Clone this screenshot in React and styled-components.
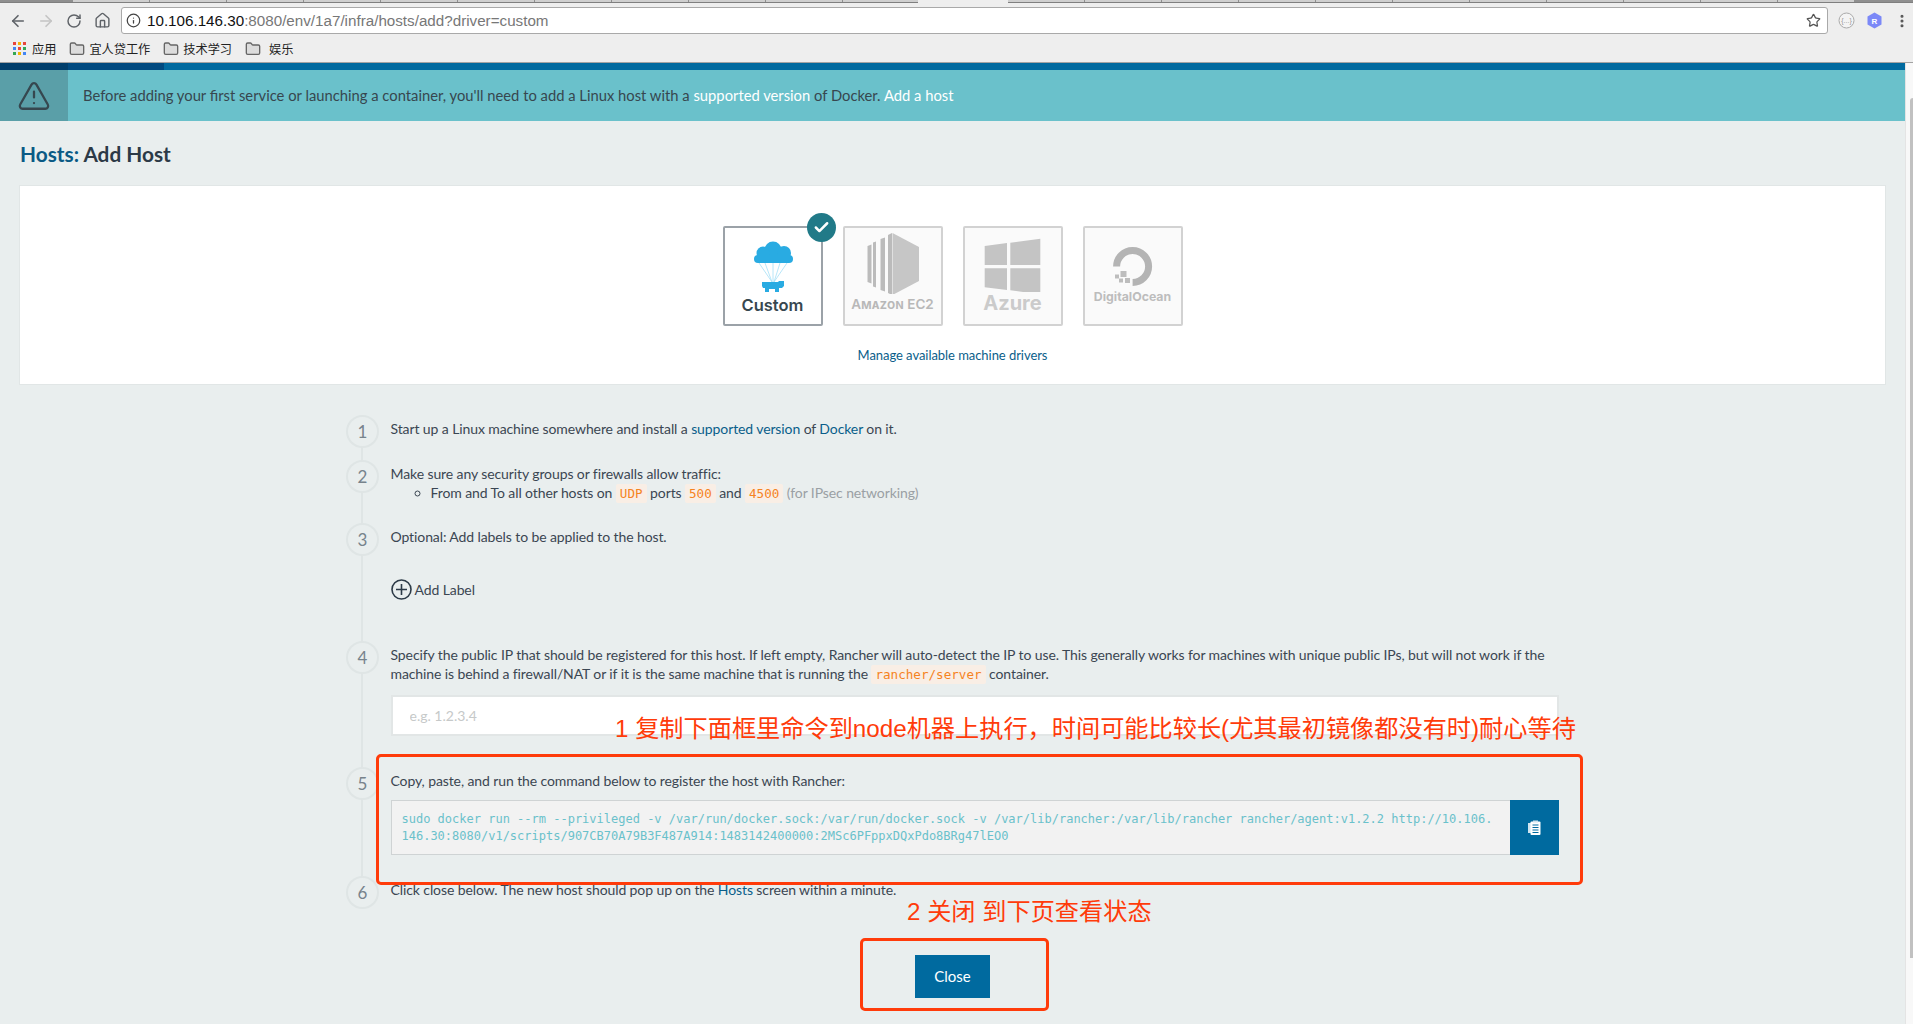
import React from 'react';
import styled, { createGlobalStyle } from 'styled-components';
import { ArrowLeft, ArrowRight, RotateCw, Home, Info, Star, EllipsisVertical, Folder, TriangleAlert, Check } from 'lucide-react';

const GlobalStyle = createGlobalStyle`
  html, body {
    height: 100%;
    margin: 0;
    overflow: hidden;
  }
  *, *::before, *::after {
    box-sizing: border-box;
  }
  body {
    font-family: Lato, "Noto Sans CJK SC", sans-serif;
    font-size: 14px;
    color: #3b4652;
    background: #e9eeee;
  }
`;

const Screen = styled.div`
  position: relative;
  width: 1913px;
  height: 1024px;
  overflow: hidden;
  display: flex;
  flex-direction: column;
`;

/* browser chrome */
const TabStrip = styled.div`
  height: 3px;
  display: flex;
  background: #eeeeee;
`;

const TabRun = styled.div`
  width: ${p => p.$width}px;
  flex: ${p => (p.$width ? 'none' : 1)};
  border-bottom: 1px solid #7f7f7f;
  background: ${p => p.$color || 'repeating-linear-gradient(90deg, #cfcfcf 0 76px, #8f8f8f 76px 77px)'};
`;

const ActiveTab = styled.div`
  width: 90px;
  flex: none;
`;

const Toolbar = styled.div`
  height: 34px;
  padding: 4px 0 3px 4px;
  display: flex;
  align-items: stretch;
  background: #eeeeee;
`;

const NavButton = styled.div`
  width: 28px;
  flex: none;
  display: flex;
  align-items: center;
  justify-content: center;
  color: ${p => p.$color || '#5f6368'};
`;

const AddressBar = styled.div`
  flex: 1;
  margin-left: 5px;
  padding-left: 4px;
  display: flex;
  align-items: center;
  background: #fff;
  border: 1px solid #a9a9a9;
  border-radius: 3px;
  font-family: "Liberation Sans", Arial, sans-serif;
  font-size: 15.2px;
  color: #777;
`;

const Host = styled.span`
  color: #111;
`;

const Url = styled.span`
  flex: 1;
  margin-left: 6px;
`;

const ToolActions = styled.div`
  width: 85px;
  flex: none;
  padding-left: 4px;
  display: flex;
`;

const BookmarksBar = styled.div`
  height: 26px;
  padding: 0 0 2px 13px;
  display: flex;
  align-items: center;
  background: #eeeeee;
  border-bottom: 1px solid #a3a3a3;
  font-size: 12.2px;
  color: #222;
  font-family: "Noto Sans CJK SC", sans-serif;
`;

const AppsGrid = styled.div`
  width: 13px;
  display: grid;
  grid-template-columns: repeat(3, 3px);
  gap: 2px;
  margin-right: 6px;
`;

const AppsDot = styled.i`
  display: block;
  height: 3px;
  background: ${p => p.$color};
`;

const Bookmark = styled.div`
  display: flex;
  align-items: center;
  gap: ${p => p.$gap || 4}px;
  margin-right: 13px;
  color: #222;
  svg {
    fill: #dcdcdc;
    color: #666;
  }
`;

/* page */
const Body = styled.div`
  flex: 1;
  display: flex;
  min-height: 0;
`;

const Page = styled.div`
  flex: 1;
  min-width: 0;
`;

const Scrollbar = styled.div`
  width: 8px;
  flex: none;
  padding: 35px 0 0 4px;
  background: #f8f8f8;
  border-left: 1px solid #e4e4e4;
`;

const ScrollThumb = styled.div`
  height: 860px;
  background: #c1c1c1;
  border-radius: 3px 0 0 0;
`;

const ProgressBar = styled.div`
  height: 7px;
  display: flex;
  background: #006a9f;
`;

const ProgressPart = styled.div`
  width: ${p => p.$width}px;
  background: ${p => p.$color};
`;

const Banner = styled.div`
  height: 51px;
  display: flex;
  align-items: center;
  background: #6ac1cb;
  font-size: 14.77px;
  color: #37474f;
`;

const BannerIcon = styled.div`
  width: 68px;
  height: 100%;
  margin-right: 15px;
  display: flex;
  align-items: center;
  justify-content: center;
  background: #5a9fa8;
  color: #36474f;
`;

const BannerText = styled.span`
  margin-bottom: 2px;
`;

const BannerLink = styled.a`
  color: #fff;
`;

const Content = styled.div`
  padding: 20px 20px 0;
`;

const Title = styled.h1`
  margin: 0 0 19px;
  font-size: 20.8px;
  line-height: 26px;
  font-weight: 700;
  color: #2c3a47;
`;

const TitleLink = styled.span`
  color: #0a5a85;
`;

const DriverCard = styled.div`
  height: 198px;
  padding-top: 40px;
  background: #fff;
  box-shadow: 0 0 0 1px #e1e6e6;
`;

const Drivers = styled.div`
  display: flex;
  justify-content: center;
  gap: 20px;
`;

const DriverTile = styled.div`
  position: relative;
  width: 100px;
  height: 100px;
  display: flex;
  flex-direction: column;
  align-items: center;
  background: ${p => (p.$active ? '#fff' : '#fafafa')};
  border: 2px solid ${p => (p.$active ? '#9ba2a8' : '#d2d2d2')};
  border-radius: 2px;
`;

const Logo = styled.svg`
  display: block;
  flex: none;
`;

const DriverLabel = styled.div`
  margin-top: ${p => p.$top}px;
  font-family: ${p => p.$font || 'Inter'}, sans-serif;
  font-size: ${p => p.$size}px;
  line-height: 20px;
  font-weight: ${p => p.$weight || 700};
  font-variant: ${p => p.$variant || 'normal'};
  white-space: nowrap;
  color: ${p => p.$color || '#c4c4c4'};
`;

const CheckBadge = styled.div`
  position: absolute;
  top: -15px;
  right: -15px;
  width: 29px;
  height: 29px;
  display: flex;
  align-items: center;
  justify-content: center;
  border-radius: 50%;
  background: #217a88;
  color: #fff;
`;

const ManageLink = styled.a`
  display: block;
  margin-top: 19px;
  text-align: center;
  font-size: 13px;
  line-height: 20px;
  letter-spacing: -0.05px;
  color: #0a5e8a;
`;

const Steps = styled.div`
  position: relative;
  width: 1213px;
  margin: 31px auto 0;
  &::before {
    content: '';
    position: absolute;
    left: 15px;
    top: 16px;
    bottom: 60px;
    width: 2px;
    background: #dfe5e5;
  }
`;

const Step = styled.div`
  position: relative;
  height: ${p => p.$height}px;
  display: flex;
  align-items: flex-start;
  gap: 11.5px;
`;

const StepNumber = styled.div`
  width: 33px;
  height: 33px;
  flex: none;
  display: flex;
  align-items: center;
  justify-content: center;
  border: 2px solid #dfe5e5;
  border-radius: 50%;
  background: #e9eeee;
  font-size: 17px;
  color: #77838c;
`;

const StepBody = styled.div`
  flex: 1;
  min-width: 0;
  padding-top: 4px;
  line-height: 19px;
  letter-spacing: -0.1px;
`;

const TextLink = styled.a`
  color: #0a5e8a;
`;

const Muted = styled.span`
  color: #9aa0a4;
`;

const Code = styled.code`
  padding: 2px 4px;
  background: #f9eee5;
  border-radius: 2px;
  font-family: "DejaVu Sans Mono", monospace;
  font-size: 12.6px;
  letter-spacing: 0;
  color: #f5831f;
`;

const SubList = styled.ul`
  margin: 0;
  padding-left: 40px;
  list-style: circle;
`;

const AddLabel = styled.div`
  margin-top: 33px;
  display: flex;
  align-items: center;
  gap: 3px;
  color: #3b4652;
  svg {
    color: #2c3a47;
  }
`;

const IpInput = styled.input`
  display: block;
  width: 100%;
  height: 41px;
  margin-top: 11px;
  padding: 0 17px;
  background: #fff;
  border: 2px solid #e2e6e6;
  font-family: Lato, sans-serif;
  font-size: 14px;
  &::placeholder {
    color: #c6c9c9;
  }
`;

const CommandRow = styled.div`
  height: 55px;
  margin-top: 10px;
  display: flex;
`;

const Command = styled.div`
  flex: 1;
  padding: 10px 10px;
  background: #f2f2f2;
  border: 1px solid #cfd3d4;
  border-right: 0;
  font-family: "DejaVu Sans Mono", monospace;
  font-size: 12px;
  line-height: 17px;
  letter-spacing: 0;
  white-space: nowrap;
  color: #6ac1cb;
`;

const CopyButton = styled.div`
  width: 49px;
  flex: none;
  display: flex;
  align-items: center;
  justify-content: center;
  background: #006a9f;
`;

const Footer = styled.div`
  display: flex;
  justify-content: center;
  width: 1865px;
`;

const CloseButton = styled.button`
  width: 75px;
  height: 43px;
  padding: 0 0 2px;
  border: 0;
  background: #006a9f;
  font-family: Lato, sans-serif;
  font-size: 15px;
  color: #fff;
`;

/* red notes drawn on top of the screenshot */
const NoteBox = styled.div`
  position: absolute;
  left: ${p => p.$left}px;
  top: ${p => p.$top}px;
  width: ${p => p.$width}px;
  height: ${p => p.$height}px;
  border: 3px solid #ff3b0a;
  border-radius: 5px;
  pointer-events: none;
`;

const NoteText = styled.div`
  position: absolute;
  left: ${p => p.$left}px;
  top: ${p => p.$top}px;
  font-family: "Liberation Sans", "Noto Sans CJK SC", sans-serif;
  font-size: 24.2px;
  line-height: 30px;
  white-space: nowrap;
  color: #ff3b0a;
`;

const appColors = ['#e8453c', '#f4b400', '#e8453c', '#4285f4', '#e8453c', '#34a853', '#34a853', '#f4b400', '#4285f4'];

function CustomLogo() {
  return (
    <Logo width="96" height="65" viewBox="2 2 96 65">
      <g stroke="#a6dff6" strokeWidth="0.8">
        <path d="M36 37 L49 56M42 37 L49 56M50 37 L50 56M57 37 L51 56M64 37 L51 56" />
      </g>
      <g fill="#29abe2">
        <circle cx="50" cy="24" r="8.500" />
        <circle cx="40" cy="27" r="6.500" />
        <circle cx="61" cy="27" r="7" />
        <rect x="31" y="29" width="39" height="8" rx="4" />
        <path d="M39 56h16l1-1h5v5l-2 2h-3v4h-4v-3h-6v3h-4v-4h-2l-1-2z" />
      </g>
    </Logo>
  );
}

function Ec2Logo() {
  return (
    <Logo width="96" height="66" viewBox="2 2 96 66">
      <g fill="#bbbbbb">
        <path d="M24.500 20l4-1.500v39l-4-1.500zM30 16.500l3-1v46l-3-1zM37.500 13l4.500-1.500v54l-4.500-1.500zM45 9l4-2v62l-4-2z" />
      </g>
      <path d="M49.500 7L76 21v34L49.500 69z" fill="#c6c6c6" />
    </Logo>
  );
}

function AzureLogo() {
  return (
    <Logo width="96" height="64" viewBox="2 2 96 64">
      <path
        fill="#c4c4c4"
        d="M21.700 20L44 17v22H21.700zM47.300 16.700l30-4V39h-30zM21.700 42.300H44V64l-22.300-2.700zM47.300 42.300h30v26l-30-4z"
      />
    </Logo>
  );
}

function OceanLogo() {
  return (
    <Logo width="96" height="58" viewBox="2 2 96 58">
      <path d="M33.600 40.500a16 16 0 1 1 16 16" fill="none" stroke="#b4b4b4" strokeWidth="7" />
      <g fill="#bdbdbd">
        <rect x="37.500" y="45" width="6" height="6" />
        <rect x="32" y="48.500" width="4" height="4" />
        <rect x="36" y="52.500" width="4" height="4" />
        <rect x="42" y="52" width="5" height="5" />
      </g>
    </Logo>
  );
}

function CopyIcon() {
  return (
    <svg width="15" height="16" viewBox="0 0 15 16">
      <path d="M1 3h3v10H1z" fill="#cfe4ef" />
      <rect x="3.500" y="1.500" width="10" height="13.500" rx="1" fill="#fff" />
      <path d="M5.500 5h6M5.500 7.500h6M5.500 10h6M5.500 12.500h6" stroke="#006a9f" strokeWidth="1" />
      <rect x="6" y="0.500" width="5" height="2" fill="#cfe4ef" />
    </svg>
  );
}

export default function App() {
  return (
    <Screen>
      <GlobalStyle />
      <TabStrip>
        <TabRun $width={73} $color="#8f8f8f" />
        <TabRun $width={845} />
        <ActiveTab />
        <TabRun $width={847} />
        <TabRun $color="#8f8f8f" />
      </TabStrip>
      <Toolbar>
        <NavButton><ArrowLeft size={18} strokeWidth={2.2} /></NavButton>
        <NavButton $color="#c4c4c4"><ArrowRight size={18} strokeWidth={2.2} /></NavButton>
        <NavButton><RotateCw size={16} strokeWidth={2.2} /></NavButton>
        <NavButton><Home size={17} strokeWidth={2} /></NavButton>
        <AddressBar>
          <Info size={15} color="#444" />
          <Url><Host>10.106.146.30</Host>:8080/env/1a7/infra/hosts/add?driver=custom</Url>
          <NavButton $color="#555"><Star size={15} strokeWidth={2} /></NavButton>
        </AddressBar>
        <ToolActions>
          <NavButton>
            <svg width="17" height="17" viewBox="0 0 17 17">
              <circle cx="8.500" cy="8.500" r="7.500" fill="#f4f4f4" stroke="#aaa" />
              <text x="8.500" y="11" fontSize="7" textAnchor="middle" fill="#999" fontFamily="Liberation Sans">{'{...}'}</text>
            </svg>
          </NavButton>
          <NavButton>
            <svg width="15" height="17" viewBox="0 0 15 17">
              <path d="M7.500 0.500l7 4v8l-7 4-7-4v-8z" fill="#7b88f7" />
              <text x="7.500" y="11.500" fontSize="8" fontWeight="700" textAnchor="middle" fill="#fff" fontFamily="Liberation Sans">R</text>
            </svg>
          </NavButton>
          <NavButton><EllipsisVertical size={16} strokeWidth={2.6} color="#555" /></NavButton>
        </ToolActions>
      </Toolbar>
      <BookmarksBar>
        <AppsGrid>
          {appColors.map((color, i) => <AppsDot key={i} $color={color} />)}
        </AppsGrid>
        <Bookmark>应用</Bookmark>
        <Bookmark><Folder size={16} />宜人贷工作</Bookmark>
        <Bookmark><Folder size={16} />技术学习</Bookmark>
        <Bookmark $gap={8}><Folder size={16} />娱乐</Bookmark>
      </BookmarksBar>
      <Body>
        <Page>
          <ProgressBar>
            <ProgressPart $width={68} $color="#003e6b" />
            <ProgressPart $width={96} $color="#004a80" />
          </ProgressBar>
          <Banner>
            <BannerIcon><TriangleAlert size={34} strokeWidth={1.6} /></BannerIcon>
            <BannerText>
              Before adding your first service or launching a container, you'll need to add a Linux host with a{' '}
              <BannerLink>supported version</BannerLink> of Docker. <BannerLink>Add a host</BannerLink>
            </BannerText>
          </Banner>
          <Content>
            <Title><TitleLink>Hosts:</TitleLink> Add Host</Title>
            <DriverCard>
              <Drivers>
                <DriverTile $active>
                  <CustomLogo />
                  <DriverLabel $top={2} $size={16.5} $weight={600} $color="#37474f">Custom</DriverLabel>
                  <CheckBadge><Check size={17} strokeWidth={3.5} /></CheckBadge>
                </DriverTile>
                <DriverTile>
                  <Ec2Logo />
                  <DriverLabel $top={0} $size={13.5} $weight={600} $variant="small-caps" $color="#b8b8b8">Amazon EC2</DriverLabel>
                </DriverTile>
                <DriverTile>
                  <AzureLogo />
                  <DriverLabel $top={1} $size={20} $color="#cbcbcb">Azure</DriverLabel>
                </DriverTile>
                <DriverTile>
                  <OceanLogo />
                  <DriverLabel $top={1} $size={12.3} $color="#bdbdbd">DigitalOcean</DriverLabel>
                </DriverTile>
              </Drivers>
              <ManageLink>Manage available machine drivers</ManageLink>
            </DriverCard>
            <Steps>
              <Step $height={45}>
                <StepNumber>1</StepNumber>
                <StepBody>
                  Start up a Linux machine somewhere and install a <TextLink>supported version</TextLink> of <TextLink>Docker</TextLink> on it.
                </StepBody>
              </Step>
              <Step $height={63}>
                <StepNumber>2</StepNumber>
                <StepBody>
                  Make sure any security groups or firewalls allow traffic:
                  <SubList>
                    <li>From and To all other hosts on <Code>UDP</Code> ports <Code>500</Code> and <Code>4500</Code> <Muted>(for IPsec networking)</Muted></li>
                  </SubList>
                </StepBody>
              </Step>
              <Step $height={118}>
                <StepNumber>3</StepNumber>
                <StepBody>
                  Optional: Add labels to be applied to the host.
                  <AddLabel>
                    <svg width="21" height="21" viewBox="0 0 21 21" fill="none" stroke="currentColor" strokeWidth="1.6">
                      <circle cx="10.500" cy="10.500" r="9.500" />
                      <path d="M10.500 5v11M5 10.500h11" />
                    </svg>
                    Add Label
                  </AddLabel>
                </StepBody>
              </Step>
              <Step $height={126}>
                <StepNumber>4</StepNumber>
                <StepBody>
                  Specify the public IP that should be registered for this host. If left empty, Rancher will auto-detect the IP to use. This generally works for machines with unique public IPs, but will not work if the machine is behind a firewall/NAT or if it is the same machine that is running the <Code>rancher/server</Code> container.
                  <IpInput placeholder="e.g. 1.2.3.4" />
                </StepBody>
              </Step>
              <Step $height={109}>
                <StepNumber>5</StepNumber>
                <StepBody>
                  Copy, paste, and run the command below to register the host with Rancher:
                  <CommandRow>
                    <Command>
                      sudo docker run --rm --privileged -v /var/run/docker.sock:/var/run/docker.sock -v /var/lib/rancher:/var/lib/rancher rancher/agent:v1.2.2 http://10.106.
                      <br />
                      146.30:8080/v1/scripts/907CB70A79B3F487A914:1483142400000:2MSc6PFppxDQxPdo8BRg47lEO0
                    </Command>
                    <CopyButton><CopyIcon /></CopyButton>
                  </CommandRow>
                </StepBody>
              </Step>
              <Step $height={79}>
                <StepNumber>6</StepNumber>
                <StepBody>
                  Click close below. The new host should pop up on the <TextLink>Hosts</TextLink> screen within a minute.
                </StepBody>
              </Step>
            </Steps>
            <Footer>
              <CloseButton>Close</CloseButton>
            </Footer>
          </Content>
        </Page>
        <Scrollbar><ScrollThumb /></Scrollbar>
      </Body>
      <NoteText $left={615} $top={714}>1 复制下面框里命令到node机器上执行，时间可能比较长(尤其最初镜像都没有时)耐心等待</NoteText>
      <NoteBox $left={376} $top={754} $width={1207} $height={131} />
      <NoteText $left={907} $top={897}>2 关闭 到下页查看状态</NoteText>
      <NoteBox $left={860} $top={938} $width={189} $height={73} />
    </Screen>
  );
}
